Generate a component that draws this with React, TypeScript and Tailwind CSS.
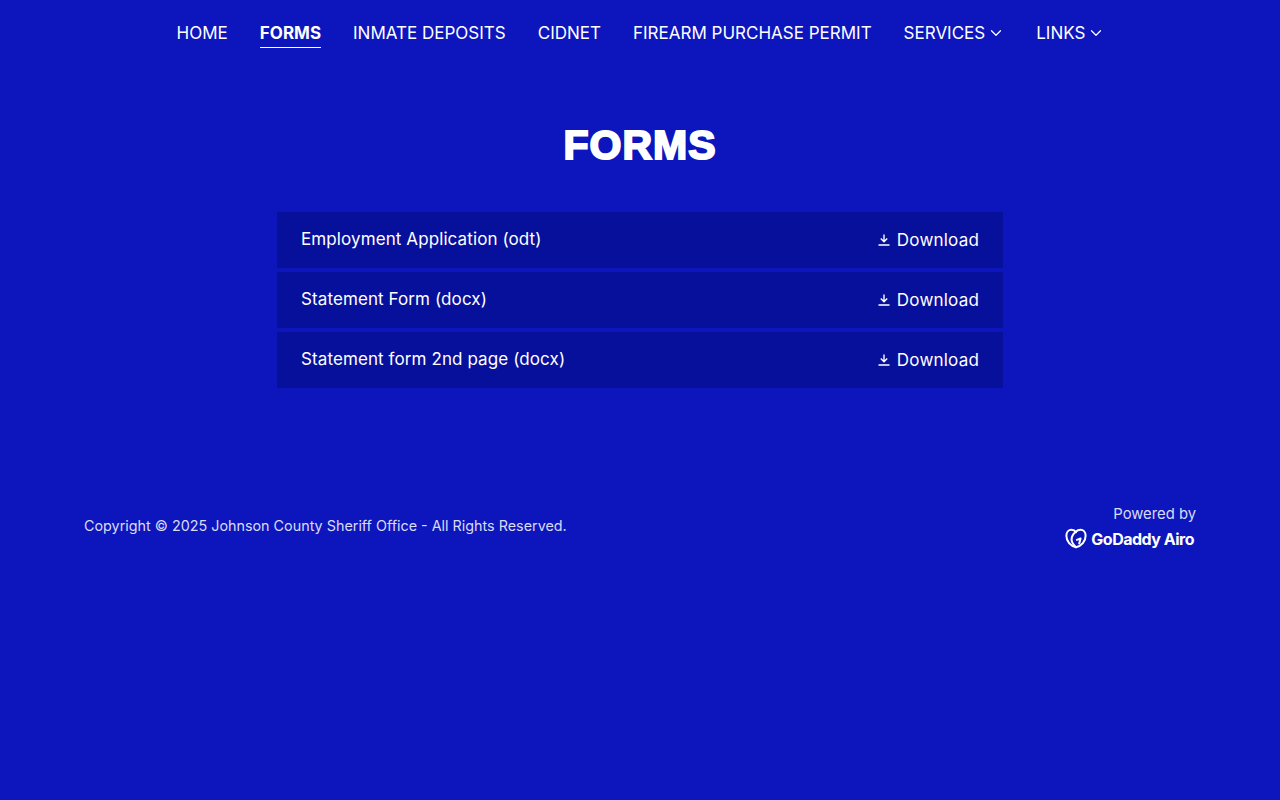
import { ChevronDown } from 'lucide-react';

const navItems = [
  { label: 'HOME' },
  { label: 'FORMS', active: true },
  { label: 'INMATE DEPOSITS' },
  { label: 'CIDNET' },
  { label: 'FIREARM PURCHASE PERMIT' },
  { label: 'SERVICES', menu: true },
  { label: 'LINKS', menu: true },
];

const forms = ['Employment Application (odt)', 'Statement Form (docx)', 'Statement form 2nd page (docx)'];

function DownloadIcon() {
  return (
    <svg viewBox="0 0 14 14" className="h-[14px] w-[14px] shrink-0" fill="none" stroke="currentColor" strokeWidth="1.4">
      <path d="M7 1.500v7M3.800 5.600 7 8.800l3.200-3.200M1.500 12h11" />
    </svg>
  );
}

function HeartLogo() {
  return (
    <svg viewBox="0 0 24 22" className="h-[21px] w-[22px]" fill="none" stroke="white" strokeWidth="2.200" strokeLinecap="round" strokeLinejoin="round">
      <path d="M12 20.500C6 19.500 1.500 14 1.500 8C1.500 4 4 1.500 7 1.500C9 1.500 11 2.500 12 4" />
      <path d="M12 20.500C18 19.500 22.500 14 22.500 8C22.500 4 20 1.500 17 1.500C13 1.500 9 5 7.500 9.500C6.500 13 8 17 12 20.500" />
      <path d="M13 12.500L17 11L15.500 16.500" />
    </svg>
  );
}

export default function App() {
  return (
    <div className="h-[800px] overflow-hidden bg-[#0d16bd] font-['Inter',sans-serif] text-white">
      <nav className="flex h-[66px] items-center justify-center gap-[32px] pl-[1px] text-[17px]">
        {navItems.map((item) => (
          <a
            key={item.label}
            className={
              item.active
                ? 'mt-[1px] border-b border-white pb-[4px] pt-[4px] font-bold leading-[20px]'
                : 'flex items-center gap-[2px] py-[4px] leading-[20px]'
            }
          >
            {item.label}
            {item.menu && <ChevronDown className="-mr-[1px] h-[18px] w-[18px]" strokeWidth={1.6} />}
          </a>
        ))}
      </nav>

      <h1 className="mt-[54px] text-center font-['Liberation_Sans',sans-serif] text-[41px] font-bold leading-[50px] tracking-[1px] [-webkit-text-stroke:2px_white]">
        FORMS
      </h1>

      <div className="mx-auto mt-[42px] flex w-[726px] flex-col gap-[4px]">
        {forms.map((name) => (
          <div key={name} className="flex h-[56px] items-center justify-between bg-[#07109a] px-[24px]">
            <span className="text-[17px] tracking-[0.1px]">{name}</span>
            <span className="flex items-center gap-[6px] text-[17px] tracking-[0.2px]">
              <DownloadIcon />
              <span className="mt-[2px]">Download</span>
            </span>
          </div>
        ))}
      </div>

      <footer className="mt-[116px] flex items-start justify-between px-[84px] text-[#d9dbf5]">
        <p className="mt-[12px] text-[14.35px] leading-[20px]">Copyright © 2025 Johnson County Sheriff Office - All Rights Reserved.</p>
        <div className="flex flex-col items-end gap-[4px]">
          <span className="text-[14.8px] leading-[20px]">Powered by</span>
          <div className="flex items-center gap-[4px] pr-[2px] text-white">
            <HeartLogo />
            <span className="text-[16px] font-bold leading-[20px] tracking-[-0.5px]">GoDaddy Airo</span>
          </div>
        </div>
      </footer>
    </div>
  );
}
